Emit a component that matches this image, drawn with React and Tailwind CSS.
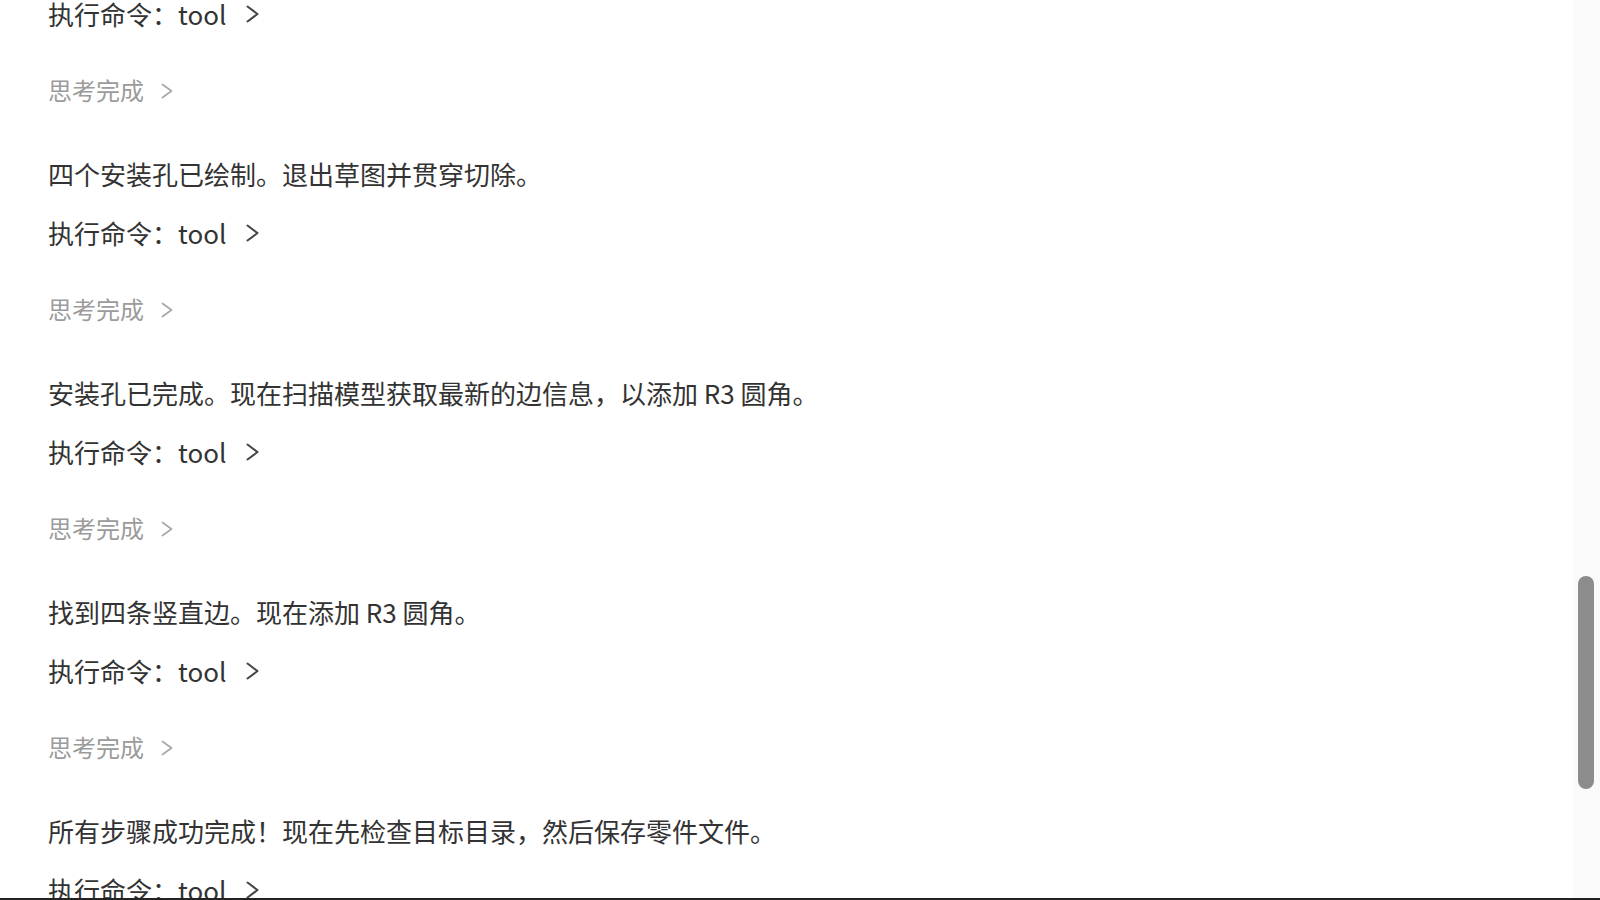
import React from "react";

const steps = [
  { text: null },
  { text: "四个安装孔已绘制。退出草图并贯穿切除。" },
  { text: "安装孔已完成。现在扫描模型获取最新的边信息，以添加 R3 圆角。" },
  { text: "找到四条竖直边。现在添加 R3 圆角。" },
  { text: "所有步骤成功完成！现在先检查目标目录，然后保存零件文件。", last: true },
];

function Chevron({ className, w, h, sw }) {
  return (
    <svg width={w} height={h} viewBox={`0 0 ${w} ${h}`} fill="none" className={className}>
      <polyline
        points={`1.5,1.5 ${w - 1.5},${h / 2} 1.5,${h - 1.5}`}
        stroke="currentColor"
        strokeWidth={sw}
        strokeLinecap="round"
        strokeLinejoin="round"
      />
    </svg>
  );
}

function ExecRow() {
  return (
    <div className="flex h-[36px] items-center text-[26px] text-[#333333]">
      <span>执行命令：tool</span>
      <Chevron w={13} h={18} sw={2} className="ml-[20px] mt-[2px] text-[#444444]" />
    </div>
  );
}

function ThinkingRow() {
  return (
    <div className="mt-[41px] flex h-[36px] items-center text-[24px] text-[#9b9b9b]">
      <span>思考完成</span>
      <Chevron w={12} h={16} sw={1.7} className="ml-[17px] mt-[2px] text-[#a8a8a8]" />
    </div>
  );
}

export default function App() {
  return (
    <div
      className="flex h-screen w-full flex-col overflow-hidden bg-white"
      style={{ fontFamily: '"Noto Sans CJK SC", "Noto Sans", sans-serif' }}
    >
      <div className="flex min-h-0 flex-1">
        <div className="min-w-0 flex-1 overflow-hidden pl-[48px]">
          <div className="-mt-[5px] flex flex-col">
            {steps.map((step, i) => (
              <div key={i} className="flex flex-col">
                {step.text ? (
                  <div
                    className={
                      "flex h-[36px] items-center text-[26px] text-[#333333] " +
                      (i === 0 ? "" : "mt-[47px]")
                    }
                  >
                    {step.text}
                  </div>
                ) : null}
                <div className={step.text ? "mt-[23px]" : ""}>
                  <ExecRow />
                </div>
                {!step.last ? <ThinkingRow /> : null}
              </div>
            ))}
          </div>
        </div>
        <div className="flex w-[27px] shrink-0 justify-center bg-[#fafafa] pt-[576px]">
          <div className="ml-[-2px] h-[213px] w-[16px] rounded-full bg-[#8c8c8c]" />
        </div>
      </div>
      <div className="h-[2px] shrink-0 bg-[#222222]" />
    </div>
  );
}
